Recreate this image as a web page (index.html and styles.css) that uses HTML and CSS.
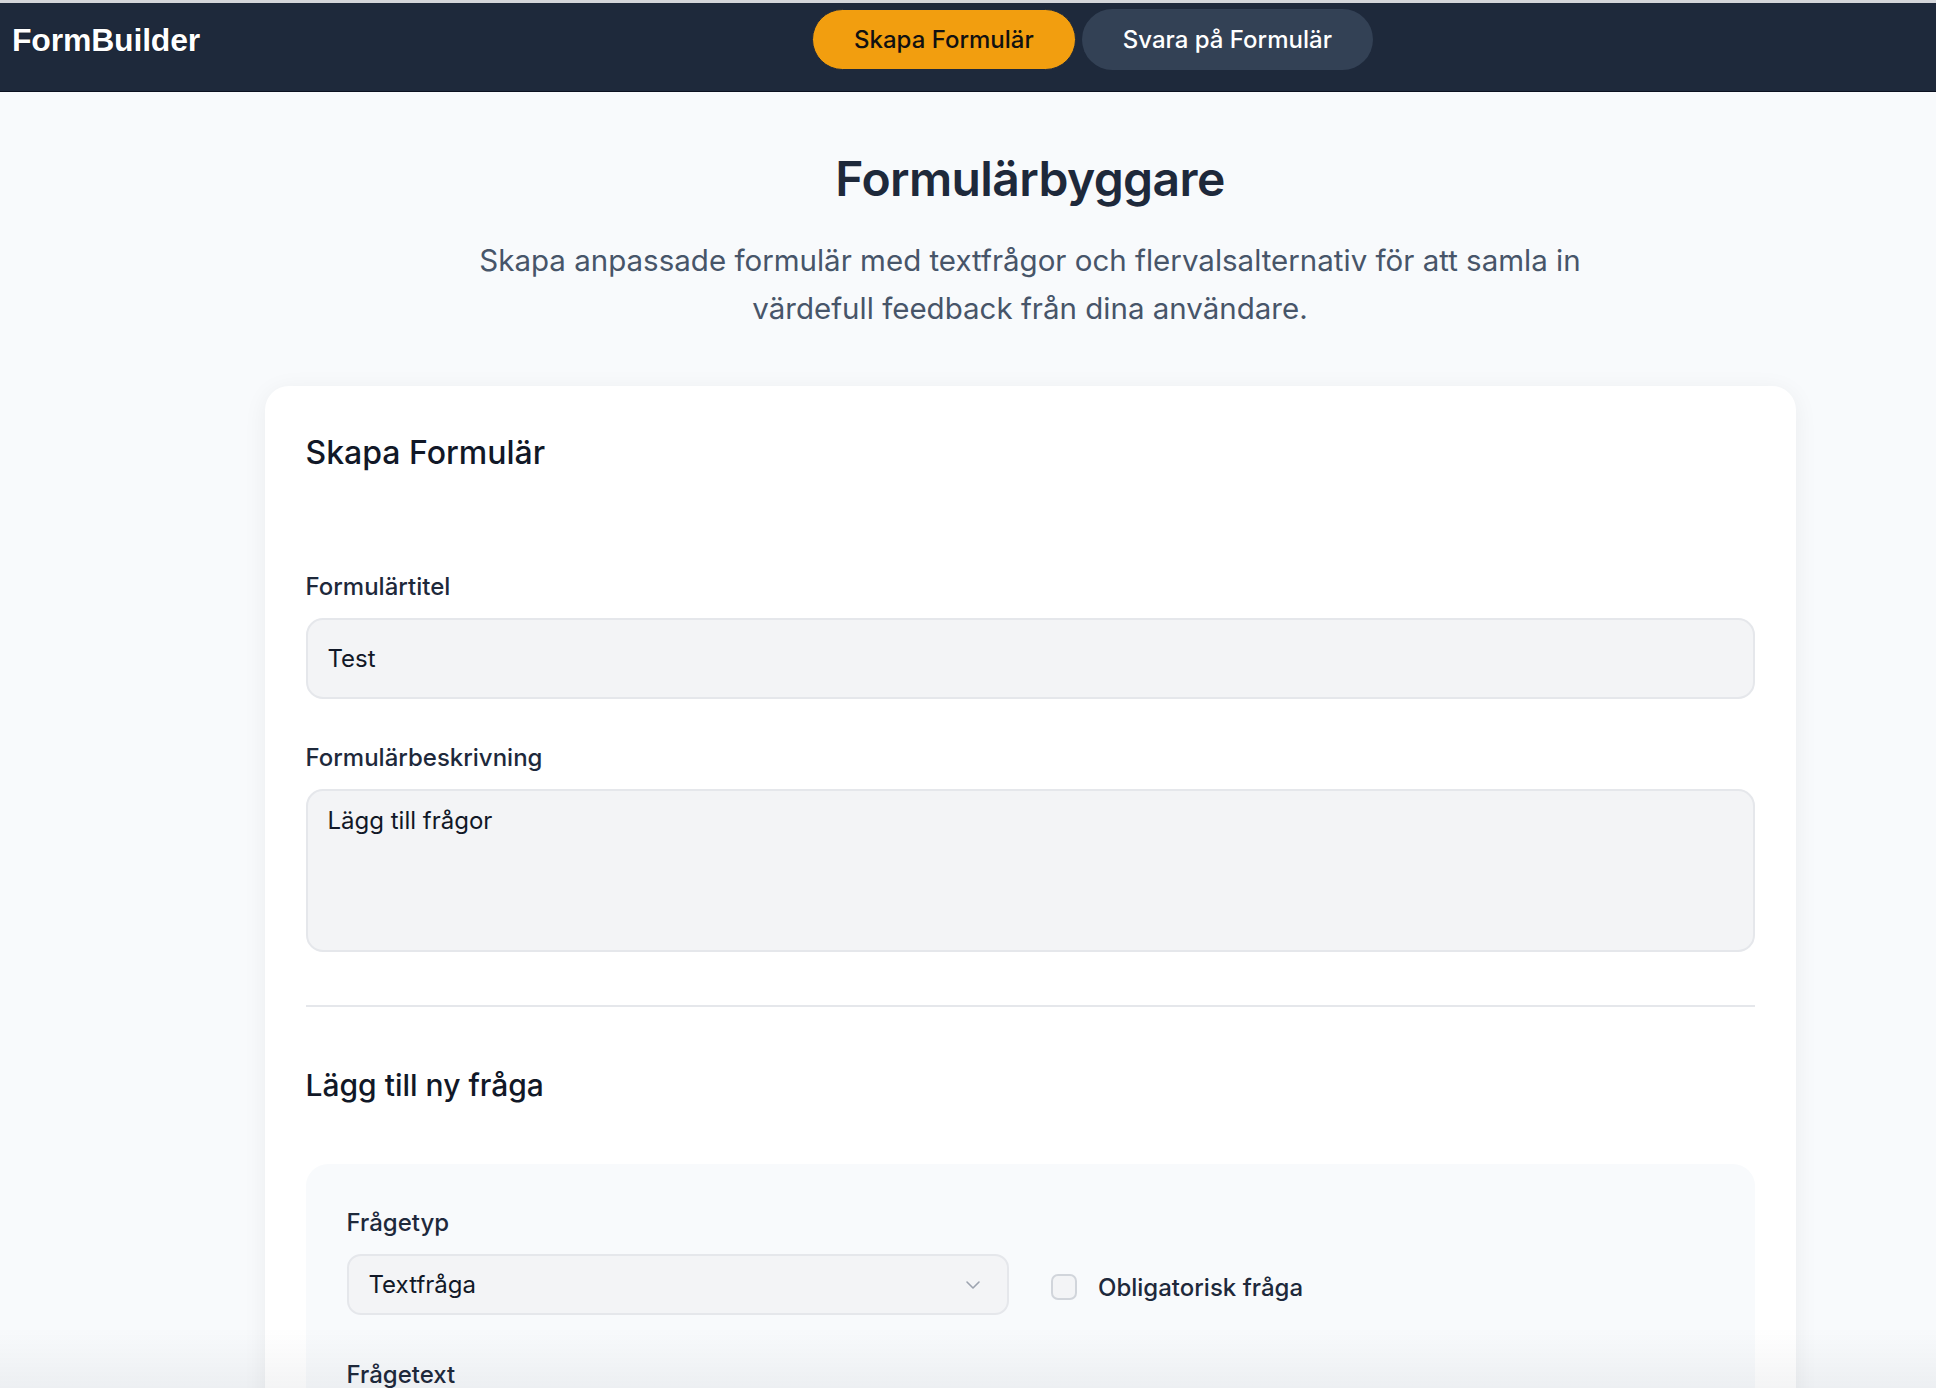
FILE: index.html
```html
<!DOCTYPE html>
<html lang="sv">
<head>
<meta charset="utf-8">
<title>FormBuilder</title>
<link rel="stylesheet" href="styles.css">
</head>
<body>
<header class="topbar">
  <div class="logo">FormBuilder</div>
  <nav class="nav">
    <button class="nav-btn nav-btn-active">Skapa Formulär</button>
    <button class="nav-btn">Svara på Formulär</button>
  </nav>
</header>
<main class="main">
  <h1 class="page-title">Formulärbyggare</h1>
  <p class="page-sub">Skapa anpassade formulär med textfrågor och flervalsalternativ för att samla in värdefull feedback från dina användare.</p>
  <section class="card">
    <h2 class="card-title">Skapa Formulär</h2>
    <div class="field field-first">
      <label class="label">Formulärtitel</label>
      <div class="input">Test</div>
    </div>
    <div class="field">
      <label class="label">Formulärbeskrivning</label>
      <div class="input textarea">Lägg till frågor</div>
    </div>
    <hr class="divider">
    <h3 class="section-title">Lägg till ny fråga</h3>
    <div class="question-box">
      <div class="q-grid">
        <div class="q-col">
          <label class="label">Frågetyp</label>
          <div class="input select">
            <span>Textfråga</span>
            <svg class="chevron" width="16" height="10" viewBox="0 0 16 10"><path d="M2 2 L8 8 L14 2" fill="none" stroke="#9ca3af" stroke-width="1.6" stroke-linecap="round" stroke-linejoin="round"/></svg>
          </div>
        </div>
        <div class="q-col q-check">
          <span class="checkbox"></span>
          <span class="check-label">Obligatorisk fråga</span>
        </div>
      </div>
      <div class="field field-q">
        <label class="label">Frågetext</label>
        <div class="input"></div>
      </div>
    </div>
  </section>
</main>
<div class="bottom-fade"></div>
</body>
</html>
```
FILE: styles.css
```css
* { box-sizing: border-box; }
html, body { margin: 0; padding: 0; }
body {
  background: #f8fafc;
  font-family: Inter, "Noto Sans", sans-serif;
  color: #1e293b;
  overflow: hidden;
}
.topbar {
  height: 92px;
  background: #1e293b;
  border-top: 3px solid #d4d6da;
  border-bottom: 1px solid #0b1120;
  display: flex;
  align-items: flex-start;
  padding-left: 12px;
  padding-top: 6px;
}
.logo {
  font-family: "Liberation Sans", Arial, sans-serif;
  font-weight: 700;
  font-size: 32px;
  line-height: 62px;
  color: #ffffff;
  text-shadow: 0 0 1px #000;
  letter-spacing: -0.2px;
}
.nav {
  display: flex;
  gap: 6px;
  margin-left: 612px;
}
.nav-btn {
  height: 61px;
  padding: 0 40px;
  border-radius: 31px;
  border: 1px solid transparent;
  background: #334155;
  color: #ffffff;
  font-family: Inter, sans-serif;
  font-size: 24px;
  font-weight: 500;
}
.nav-btn-active {
  background: #f29e0f;
  color: #111111;
  border-color: #1e293b;
  padding: 0 41px;
}
.main {
  padding-left: 124px;
  padding-top: 58px;
}
.page-title {
  margin: 0;
  text-align: center;
  font-size: 48px;
  line-height: 58px;
  font-weight: 600;
  color: #1e293b;
  letter-spacing: -0.6px;
}
.page-sub {
  margin: 28px auto 0;
  max-width: 1160px;
  text-align: center;
  font-size: 29.5px;
  line-height: 48px;
  color: #475569;
}
.card {
  width: 1531px;
  margin: 54px auto 0;
  background: #ffffff;
  border-radius: 24px;
  box-shadow: 0 4px 24px rgba(15, 23, 42, 0.06);
  padding: 41px 41px 60px;
}
.card-title {
  margin: 0;
  font-size: 32px;
  line-height: 52px;
  font-weight: 500;
  color: #111827;
}
.field { margin-top: 44px; }
.field-first { margin-top: 93px; }
.field-q { margin-top: 45px; }
.label {
  display: block;
  font-size: 24px;
  line-height: 30px;
  font-weight: 500;
  color: #1e293b;
  margin-bottom: 16px;
}
.input {
  height: 81px;
  background: #f3f4f6;
  border: 2px solid #e5e7eb;
  border-radius: 17px;
  padding: 0 20px;
  display: flex;
  align-items: center;
  font-size: 24px;
  color: #111827;
}
.textarea {
  height: 163px;
  align-items: flex-start;
  padding-top: 15px;
  line-height: 30px;
}
.divider {
  margin: 53px 0 0;
  border: 0;
  border-top: 2px solid #e5e7eb;
}
.section-title {
  margin: 52px 0 0;
  font-size: 30px;
  line-height: 52px;
  font-weight: 500;
  color: #111827;
}
.question-box {
  margin-top: 53px;
  background: #f8fafc;
  border-radius: 22px;
  padding: 44px 41px 41px;
}
.q-grid {
  display: grid;
  grid-template-columns: 1fr 1fr;
  gap: 42px;
  align-items: end;
}
.select {
  height: 61px;
  border-radius: 14px;
  justify-content: space-between;
  padding-right: 26px;
}
.q-check {
  display: flex;
  align-items: center;
  gap: 21px;
  height: 56px;
}
.checkbox {
  width: 26px;
  height: 26px;
  border: 2px solid #d1d5db;
  border-radius: 7px;
  background: #f3f4f6;
}
.check-label {
  font-size: 24px;
  font-weight: 500;
  color: #1e293b;
}
.bottom-fade {
  position: fixed;
  left: 0;
  right: 0;
  bottom: 0;
  height: 60px;
  background: linear-gradient(to bottom, rgba(30, 41, 59, 0), rgba(30, 41, 59, 0.05));
  pointer-events: none;
}
```
